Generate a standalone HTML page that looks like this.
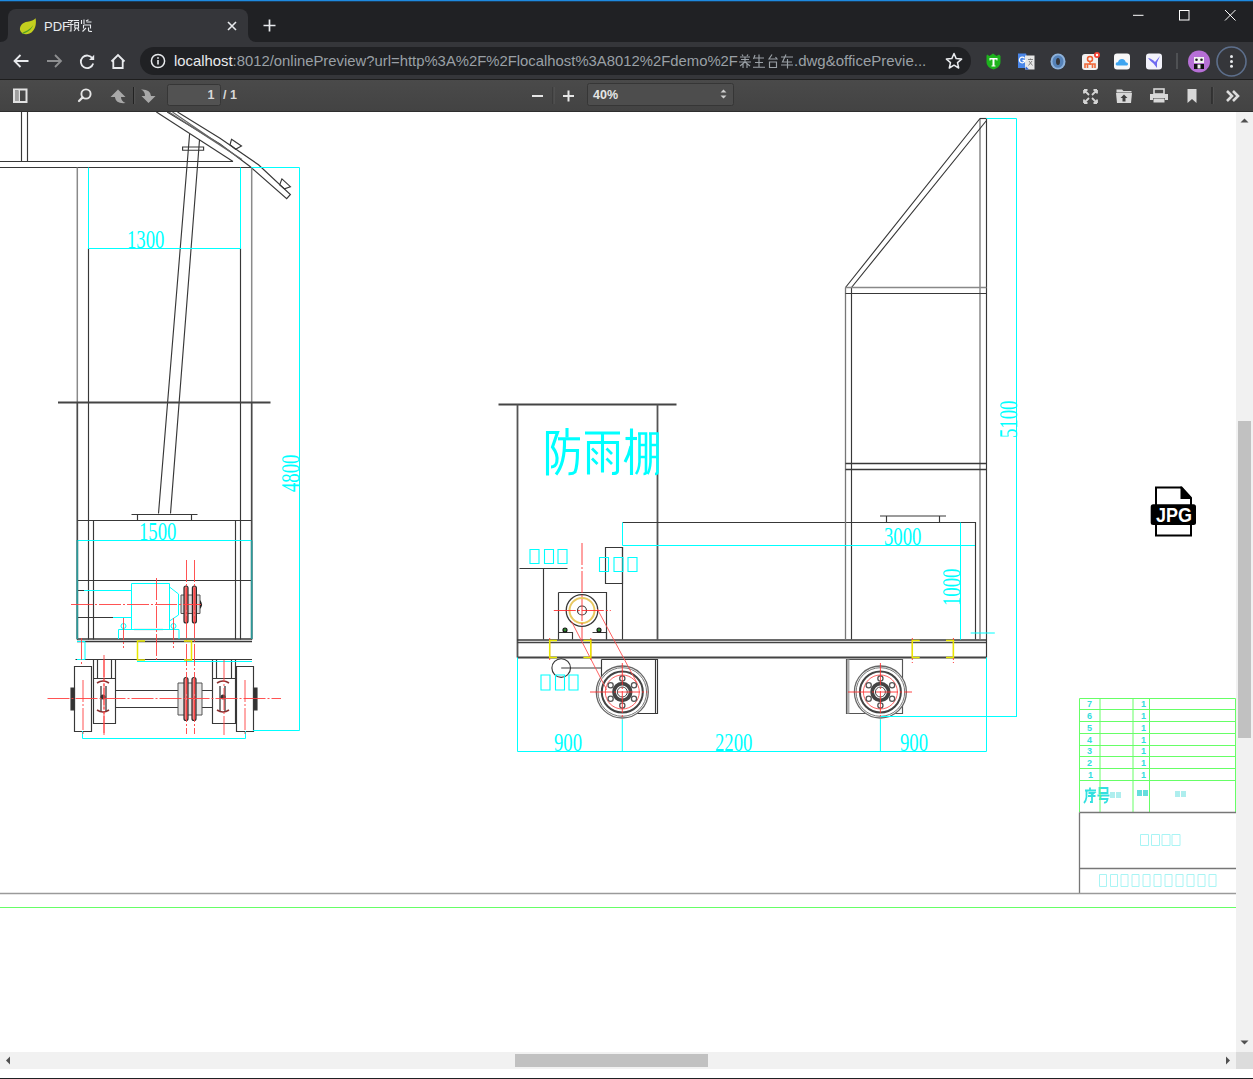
<!DOCTYPE html>
<html><head><meta charset="utf-8">
<style>
*{margin:0;padding:0;box-sizing:border-box}
html,body{width:1253px;height:1079px;overflow:hidden;background:#fff;font-family:"Liberation Sans",sans-serif}
.abs{position:absolute}
.t{position:absolute;white-space:nowrap}
</style></head><body>
<div class="abs" style="left:0;top:112px;width:1236px;height:940px;background:#fff"></div>
<svg class="abs" style="left:0;top:0" width="1236" height="1052" viewBox="0 0 1236 1052">
<defs><clipPath id="cc"><rect x="0" y="112" width="1236" height="940"/></clipPath></defs>
<g clip-path="url(#cc)" fill="none" stroke-width="1">
<!-- ===== LEFT VIEW ===== -->
<g stroke="#383838" stroke-width="1.15">
 <!-- top-left posts -->
 <path d="M21.5 100V162M27.5 100V162"/>
 <path d="M0 161.5H233M0 167.5H251.5"/>
 <!-- roof bars -->
 <path d="M156.4 112L233 161.5"/>
 <path d="M167.2 112L220 144.1L249.7 166.3L286.7 198.6L290.4 194.5L258.5 164.8L220 138.2L177.5 112"/>
 <path d="M169 112L242 159.6M172.5 112L242 159.6" stroke="#666"/>
 <path d="M231.5 139.3L241.5 145.9L235.6 149.3L230 144.8Z"/>
 <path d="M281.9 178.9L290.4 186.7L284.5 188.9L279.7 184.9Z"/>
 <!-- inclined post -->
 <path d="M189.6 134L158.5 513.5M199.5 140L170.5 513.5"/>
 <path d="M182.6 147H203.6V150.2H182.6Z"/>
 <!-- uprights -->
 <path d="M77.3 167.5V402M251.7 167.5V402" stroke="#8a8a8a" stroke-width="1.5"/><path d="M77.3 402V639.5M251.7 402V639.5" stroke="#4a4a4a" stroke-width="1.7"/>
 <path d="M88.5 248.5V639.5M240.5 248.5V639.5"/>
 <path d="M58 402.5H270.5" stroke="#444" stroke-width="1.9"/>
 <!-- plate -->
 <path d="M131.5 514.5H197.5M137.5 514.5V520.5M191.5 514.5V520.5"/>
 <path d="M77.5 520.5H251.5M93.5 520.5V639.5M235.5 520.5V639.5"/>
 <path d="M77.5 580.5H251.5"/>
 <path d="M77.5 590.5H84M77.5 617.5H113"/>
 <path d="M77 639H252M77 641.5H252" stroke-width="1.3"/>
 <path d="M75.5 659.5H252"/>
 <path d="M134 629.5H163"/>
 <!-- wheels -->
 <path d="M74.5 666.5H91.5V731.5H74.5Z"/>
 <path d="M236.5 666.5H253.5V731.5H236.5Z"/>
 <path d="M71 688H74.5V710H71Z" fill="#333"/>
 <path d="M253.5 688H257V710H253.5Z" fill="#333"/>
 <path d="M93.5 659.5H115.5V723.5H93.5ZM97.5 659.5V678M111.5 659.5V678M93.5 678.5H115.5"/>
 <path d="M212.5 659.5H235.5V723.5H212.5ZM216.5 659.5V678M231.5 659.5V678M212.5 678.5H235.5"/>
 <path d="M115.5 690.5H212.5M115.5 707.5H212.5"/>
  <path d="M101 686V712M106 686V712M220 686V712M225 686V712" stroke="#222"/>
</g>
<!-- left view coupling (red/dark) -->
<path d="M181 595H200V613.5H181Z" fill="#ddd" stroke="#555" stroke-width="1"/>
<path d="M200 600Q204 604.5 200 609Z" fill="#222"/>
<g stroke="#2a2a2a" stroke-width="1.2">
 <rect x="184" y="586" width="4" height="37" rx="2" fill="#f07070"/>
 <rect x="192.4" y="586" width="4" height="37" rx="2" fill="#f07070"/>
 <path d="M178 683H202V715H178Z" fill="#e6e6e6" stroke="#555" stroke-width="1"/>
 <rect x="184" y="677.5" width="4" height="43" rx="2" fill="#f08080"/>
 <rect x="192" y="677.5" width="4" height="43" rx="2" fill="#f08080"/>
 <path d="M97 683Q103 679 109 683M97 710Q103 714 109 710M217 683Q223 679 229 683M217 710Q223 714 229 710" stroke="#8a3030" stroke-width="1.6"/>
 <circle cx="103" cy="697" r="2.5" fill="#333" stroke="none"/>
 <circle cx="223" cy="697" r="2.5" fill="#333" stroke="none"/>
</g>
<g stroke="#00ffff">
 <path d="M88.5 167.5V248.5M240.5 167.5V248.5M88.5 248.5H240.5"/>
 <path d="M251.5 167.5H299.5V730.5M253 730.5H299.5"/>
 <path d="M77.5 540.5H251.5"/><path d="M77.3 540V639M251.7 540.5V639" stroke="#2a9a9a" stroke-width="1.7"/>
 <path d="M84 590.5H131.5M113 617.5H131.5"/>
 <path d="M131.5 583.5H169.5V629.5H131.5Z"/>
 <path d="M169.5 587L178.5 594V615L169.5 621"/>
 <path d="M118.5 629.5H179V639M118.5 629.5V639"/>
 <path d="M77 641.5H85V659.5H77"/>
 <path d="M137 661.5H252"/>
 <circle cx="123.5" cy="626" r="2.5"/><circle cx="173.5" cy="626" r="2.5"/>
 <path d="M82.5 731V738.5H245.5V731"/>
</g>
<g stroke="#ff4040" stroke-dasharray="22 2 2 2" stroke-width="0.9">
 <path d="M71 604.5H201M156.5 578V662M123.5 618V648M173.5 618V648M81.5 638V665"/>
 <path d="M186.5 560V734M194.5 560V734"/>
 <path d="M47.5 698.5H281M83 680V735M245 680V735M104 660V735M224 660V735M104 655V735"/>
</g>
<g stroke="#e8e800" stroke-width="1.5"><path d="M145 641H137.5V660H145M184 641H191.5V660H184"/></g>
<!-- ===== RIGHT VIEW ===== -->
<g stroke="#383838" stroke-width="1.15">
 <path d="M498.5 404.5H676.5" stroke="#444" stroke-width="1.9"/>
 <path d="M517.5 404.5V657.5M657.5 404.5V639.5" stroke="#555" stroke-width="1.8"/>
 <path d="M519.5 568.5H567.5M543.5 568.5V639.5"/>
 <path d="M605.5 547.5H622.5V583.5H605.5Z"/>
 <path d="M622.5 522.5H975.5V639.5"/>
 <path d="M622.5 547V639.5"/>
 <path d="M558.5 592.5H606.5V639.5M558.5 592.5V639.5"/>
 <path d="M558.5 632.5H572.5V639.5M592.5 632.5H606.5V639.5"/>
 <circle cx="565" cy="630" r="2" fill="#2a8a2a" stroke="#111"/><circle cx="599" cy="630" r="2" fill="#2a8a2a" stroke="#111"/>
 <circle cx="582" cy="610.5" r="15.8" stroke-width="1.3"/>
 <circle cx="582" cy="610.5" r="4.5"/>
 <!-- frame -->
 <path d="M517 640H986.5" stroke-width="1.3"/><path d="M517 642.5H986.5" stroke="#444" stroke-width="1.6"/>
 <path d="M517 657.5H986.5" stroke-width="1.8" stroke="#444"/>
 <!-- right uprights -->
 <path d="M845.5 287.5V639.5" stroke="#777" stroke-width="1.3"/><path d="M851.5 287.5V639.5"/>
 <path d="M980 118.5V639.5" stroke="#777" stroke-width="1.3"/><path d="M986.5 118.5V657.5"/>
 <path d="M980 118.5H986.5"/>
 <path d="M845.5 287.5L980 118.5M851.5 287.5L986.5 120.5"/>
 <path d="M845.5 287.5H986.5" stroke="#888" stroke-width="1.4"/><path d="M845.5 293.5H986.5"/>
 <path d="M845.5 463.5H986.5M845.5 469.5H986.5" stroke-width="1.3"/>
 <!-- tank plate -->
 <path d="M880 516H946M886.5 516V522.5M939.5 516V522.5"/>
 <!-- small circle -->
 <circle cx="561.2" cy="668" r="9.3"/>
 <path d="M561.2 668H601.5"/>
 <!-- wheel brackets -->
 <path d="M601.5 659.5H657.5V713.5H630M601.5 659.5V686"/>
 <path d="M655.5 659.5V713.5"/>
 <path d="M846.5 659.5H902.5V713.5H846.5Z" stroke="#555"/><path d="M848.2 659.5V713.5" stroke="#aaa" stroke-width="2.5"/>
</g>
<!-- wheels -->
<g stroke="#444">
 <circle cx="622.3" cy="692" r="26" stroke-width="1.3" fill="#fff" stroke="#666"/>
 <circle cx="622.3" cy="692" r="24.3" stroke="#777"/>
 <circle cx="622.3" cy="692" r="20.5" stroke-width="2"/>
 <circle cx="622.3" cy="692" r="8.3" stroke-width="3.8"/>
 <circle cx="622.3" cy="692" r="5"/>
 <circle cx="880.4" cy="692" r="26" stroke-width="1.3" fill="#fff" stroke="#666"/>
 <circle cx="880.4" cy="692" r="24.3" stroke="#777"/>
 <circle cx="880.4" cy="692" r="20.5" stroke-width="2"/>
 <circle cx="880.4" cy="692" r="8.3" stroke-width="3.8"/>
 <circle cx="880.4" cy="692" r="5"/>
</g>
<g stroke="#ff5050" stroke-width="0.9">
 <circle cx="622.3" cy="692" r="17"/>
 <circle cx="880.4" cy="692" r="17"/>
 <g stroke="#555" stroke-width="1.3"><circle cx="622.3" cy="705.5" r="2.6"/><circle cx="610.6" cy="698.8" r="2.6"/><circle cx="610.6" cy="685.2" r="2.6"/><circle cx="622.3" cy="678.5" r="2.6"/><circle cx="634.0" cy="685.2" r="2.6"/><circle cx="634.0" cy="698.8" r="2.6"/><circle cx="880.4" cy="705.5" r="2.6"/><circle cx="868.7" cy="698.8" r="2.6"/><circle cx="868.7" cy="685.2" r="2.6"/><circle cx="880.4" cy="678.5" r="2.6"/><circle cx="892.1" cy="685.2" r="2.6"/><circle cx="892.1" cy="698.8" r="2.6"/></g>
 <circle cx="582" cy="610.5" r="12.5" stroke="#e8c860" stroke-width="2"/>
 <path d="M571.4 621.2L606.6 689.7M597.3 609L637.2 683.3"/>
</g>
<g stroke="#ff3030" stroke-dasharray="22 2 2 2" stroke-width="0.9">
 <path d="M582 543V640M553.8 610.5H610.8"/>
 <path d="M590 692H647.4M622.3 663V719.4M848 692H912M880.4 663V719.4"/>
 <path d="M549.7 638V662M590.8 638V662M912.3 638V663M953.4 638V663"/>
</g>
<g stroke="#e8e800" stroke-width="1.5"><path d="M557 640.5H549.7V657.5H557M583.4 640.5H590.8V657.5H583.4M919.7 640.5H912.3V657.5H919.7M946 640.5H953.4V657.5H946"/></g>
<g stroke="#00ffff">
 <path d="M622.5 522.5V545.5H975M960.5 522.5V639.5"/>
 <path d="M970.7 633H994.8"/>
 <path d="M517.5 657.5V751.5H986.5V657.5M622.3 719.4V751.5M880.4 719.4V751.5"/>
 <path d="M986.5 118.5H1016.5V717M880.4 716.5H1016.5"/>
</g>
</g>
<!-- dimension texts -->
<g fill="#00ffff" font-family="Liberation Serif" font-size="26">
 <text transform="translate(127,248) scale(0.72,1)">1300</text>
 <text transform="translate(139,540) scale(0.72,1)">1500</text>
 <text transform="translate(884,545) scale(0.72,1)">3000</text>
 <text transform="translate(554,751) scale(0.72,1)">900</text>
 <text transform="translate(715,751) scale(0.72,1)">2200</text>
 <text transform="translate(900,751) scale(0.72,1)">900</text>
 <text transform="translate(299,492) rotate(-90) scale(0.72,1)">4800</text>
 <text transform="translate(1017,438) rotate(-90) scale(0.72,1)">5100</text>
 <text transform="translate(960,606) rotate(-90) scale(0.72,1)">1000</text>
</g>
<!-- CJK big text -->
<g fill="none" stroke="#00ffff" stroke-width="3.1" stroke-linecap="butt" stroke-linejoin="miter">
 <path d="M547.5 431V475.5"/>
 <path d="M546 432.5H557.5L552.5 447Q558.5 455 556.8 462Q555.5 467 551 467"/>
 <path d="M567 428V437.5"/>
 <path d="M558 438.8H580"/>
 <path d="M564.5 440Q565 463 556 474.5"/>
 <path d="M564 450.5H577.5Q577.5 466 575 472Q573 474 568.5 473.8"/>
 <path d="M585 433H620"/>
 <path d="M602.5 433V472.5"/>
 <path d="M588.5 474.5V442.5H617.5V471Q617.5 473.8 612 473.5"/>
 <path d="M592 448.5L597.5 454M592 458.5L597.5 464M606.5 448.5L612 454M606.5 458.5L612 464" stroke-width="2.8"/>
 <path d="M625.5 438.5H637"/>
 <path d="M631.5 428.5V475"/>
 <path d="M631 446Q629 455 625 462"/>
 <path d="M639.5 433V462Q639 470 636 474M638 433.5H646V472Q646 474 643.5 474M639.5 445H646M639.5 457H646" stroke-width="2.6"/>
 <path d="M650.5 433V462Q650 470 647.5 474M649 433.5H657.5V472Q657.5 474 655 474M650.5 445H657.5M650.5 457H657.5" stroke-width="2.6"/>
</g>
<g fill="none" stroke="#33e0e0" stroke-width="1.8">
 <path d="M1090 787.5V790M1085 790.5H1096M1086.5 790.5V797Q1086 801 1084 803M1088.5 793H1094L1091 795.5M1088 796H1095.5M1092 796V802H1090"/>
 <path d="M1099.5 788H1107.5V793H1099.5ZM1097.5 795.5H1109.5M1101 795.5L1100 799H1107.5Q1107 803 1104 802.5"/>
</g>
<g fill="#aeeeee">
 <rect x="1110" y="792" width="5" height="6"/><rect x="1116" y="792" width="5" height="6"/>
 <rect x="1137" y="790" width="5" height="6" fill="#66dddd"/><rect x="1143" y="790" width="5" height="6" fill="#66dddd"/>
 <rect x="1175" y="791" width="5" height="6"/><rect x="1181" y="791" width="5" height="6"/>
</g>
<!-- tofu boxes -->
<g fill="none" stroke="#00ffff" stroke-width="1.1">
 <path d="M530 549.5h9v14h-9zM544.5 549.5h9v14h-9zM558 549.5h9v14h-9z"/>
 <path d="M599.5 557.5h9v14h-9zM614 557.5h9v14h-9zM628 557.5h9v14h-9z"/>
 <path d="M541 675h9v15h-9zM555.5 675h9v15h-9zM569 675h9v15h-9z"/>
</g>
<!-- TITLE BLOCK -->
<g fill="none">
 <g stroke="#66ff66" stroke-width="1">
 <path d="M1079.5 698.5H1235.5M1079.5 709.5H1235.5M1079.5 721.5H1235.5M1079.5 733.5H1235.5M1079.5 745.5H1235.5M1079.5 756.5H1235.5M1079.5 768.5H1235.5M1079.5 780.5H1235.5"/>
 <path d="M1079.5 698.5V812M1100 698.5V812M1133 698.5V812M1149.5 698.5V812M1235.5 698.5V812"/>
 </g>
 <path d="M1079.5 812.5H1236M1079.5 868.5H1236M1079.5 812.5V893" stroke="#777" stroke-width="1.3"/>
 <path d="M0 893.5H1236" stroke="#9a9a9a" stroke-width="1.5"/>
 <path d="M0 907.5H1236" stroke="#66ff66" stroke-width="1.2"/>
</g>
<g fill="#33dddd" font-family="Liberation Sans" font-size="9" font-weight="bold">
 <text x="1087" y="707">7</text><text x="1087" y="719">6</text><text x="1087" y="731">5</text><text x="1087" y="743">4</text><text x="1087" y="754">3</text><text x="1087" y="766">2</text><text x="1088" y="778">1</text>
 <text x="1141" y="707">1</text><text x="1141" y="719">1</text><text x="1141" y="731">1</text><text x="1141" y="743">1</text><text x="1141" y="754">1</text><text x="1141" y="766">1</text><text x="1141" y="778">1</text>
</g>
<g fill="none" stroke="#a8f4f4" stroke-width="1">
 <path d="M1140.5 834.5h8v11h-8zM1151.5 834.5h8v11h-8zM1162 834.5h8v11h-8zM1172 834.5h8v11h-8z"/>
 <path d="M1099.5 874.5h7v12h-7zM1110.5 874.5h7v12h-7zM1121 874.5h7v12h-7zM1132 874.5h7v12h-7zM1143 874.5h7v12h-7zM1154 874.5h7v12h-7zM1165 874.5h7v12h-7zM1176 874.5h7v12h-7zM1187 874.5h7v12h-7zM1198 874.5h7v12h-7zM1209 874.5h7v12h-7z"/>
</g>
<!-- JPG icon -->
<g>
 <path d="M1156 487.5H1181L1191 498.5V535.5H1156Z" fill="none" stroke="#000" stroke-width="2"/>
 <path d="M1180.5 486.5H1182L1192 497.5V499H1180.5Z" fill="#000"/>
 <rect x="1150.7" y="504.2" width="45.3" height="20.8" rx="2.5" fill="#000"/>
 <text x="1156" y="522" font-family="Liberation Sans" font-weight="bold" font-size="20.5" fill="#fff" textLength="36" lengthAdjust="spacingAndGlyphs">JPG</text>
</g>
</svg>
<!-- TAB STRIP -->
<div class="abs" style="left:0;top:0;width:1253px;height:42px;background:#202124"></div>
<div class="abs" style="left:0;top:0;width:1253px;height:1px;background:#1d8ae0"></div>
<div class="abs" style="left:0;top:1px;width:1253px;height:1px;background:#1a5a8f;opacity:.5"></div>
<div class="abs" style="left:8px;top:9px;width:240px;height:34px;background:#35363a;border-radius:8px 8px 0 0"></div>
<div class="abs" style="left:248px;top:30px;width:8px;height:12px;background:#35363a"></div>
<div class="abs" style="left:248px;top:9px;width:8px;height:33px;background:#202124;border-bottom-left-radius:8px"></div>
<svg class="abs" style="left:0;top:0" width="60" height="45" viewBox="0 0 60 45">
 <path d="M0 30H8V42H0Z" fill="#35363a"/>
 <path d="M0 9H8V34Q8 42 0 42Z" fill="#202124"/>
 <path d="M35.6 18.3C36.6 24 35.5 31 29.5 33.6C25.5 35 21 34 20 30C19.5 26 22.5 22.3 27.5 21.8C31 21.4 34 20.3 35.6 18.3Z" fill="#c3cf1e"/>
 <path d="M21.8 33.2C25 31.5 30.5 29.5 33.2 25C31.5 30 27 32.5 23 33.8Z" fill="#4f9e23"/>
</svg>
<div class="t" style="left:44px;top:18px;font-size:13px;color:#e8eaed;line-height:17px">PDF</div>
<svg class="abs" style="left:67px;top:19px" width="26" height="14" viewBox="0 0 26 14"><g fill="none" stroke="#e8eaed" stroke-width="1.1">
 <path d="M1 1.5H5.5L3.2 4M0.5 5.5H6.5M4 4.5V12H2.5"/>
 <path d="M6.5 1.5H12M7.8 3.5H11.5V9H7.8ZM7.8 6.3H11.5M9 9.2L7 12M10.5 9.2L12 12"/>
 <path d="M14.5 1V5M17 0.5V5M19 2L21.5 0.8M19.5 3H24.5"/>
 <path d="M16.5 6H23.5V9.5M16.5 6V9.5M19 9L15.5 12.5M21.5 8.5V11.5Q21.5 12.5 25 12.5"/>
</g></svg>
<svg class="abs" style="left:227px;top:21px" width="10" height="10" viewBox="0 0 10 10"><path d="M1 1L9 9M9 1L1 9" stroke="#e8eaed" stroke-width="1.6"/></svg>
<svg class="abs" style="left:263px;top:19px" width="13" height="13" viewBox="0 0 13 13"><path d="M6.5 0.5V12.5M0.5 6.5H12.5" stroke="#e8eaed" stroke-width="1.7"/></svg>
<svg class="abs" style="left:1130px;top:8px" width="120" height="14" viewBox="0 0 120 14">
 <path d="M3 7.3H13.5" stroke="#fff" stroke-width="1"/>
 <rect x="49.5" y="2.5" width="9.5" height="9.5" fill="none" stroke="#fff" stroke-width="1"/>
 <path d="M95 2L105.5 12.5M105.5 2L95 12.5" stroke="#fff" stroke-width="1"/>
</svg>
<!-- TOOLBAR -->
<div class="abs" style="left:0;top:42px;width:1253px;height:38px;background:#35363a"></div>
<svg class="abs" style="left:10px;top:50px" width="120" height="22" viewBox="0 0 120 22">
 <path d="M18.5 11H5M10.5 5L4.5 11L10.5 17" fill="none" stroke="#e8eaed" stroke-width="1.8"/>
 <path d="M37 11H50.5M45 5L51 11L45 17" fill="none" stroke="#8e8f91" stroke-width="1.8"/>
 <path d="M82.5 8.5 A6.3 6.3 0 1 0 83.2 13.5" fill="none" stroke="#e8eaed" stroke-width="1.8"/>
 <path d="M84.2 4.8V10H79Z" fill="#e8eaed"/>
 <path d="M101.5 11.5L108 5L114.5 11.5M103.3 10V18H112.7V10" fill="none" stroke="#e8eaed" stroke-width="1.8"/>
</svg>
<div class="abs" style="left:140px;top:47px;width:831px;height:28px;background:#202124;border-radius:14px"></div>
<svg class="abs" style="left:150px;top:52px" width="18" height="18" viewBox="0 0 18 18">
 <circle cx="8" cy="9" r="6.6" fill="none" stroke="#e8eaed" stroke-width="1.5"/>
 <rect x="7.2" y="8" width="1.6" height="4.5" fill="#e8eaed"/><rect x="7.2" y="5.2" width="1.6" height="1.6" fill="#e8eaed"/>
</svg>
<div class="t" style="left:174px;top:52px;font-size:15px;line-height:18px;color:#9aa0a6;transform:scaleX(0.9895);transform-origin:0 0"><span style="color:#e8eaed">localhost</span>:8012/onlinePreview?url=http%3A%2F%2Flocalhost%3A8012%2Fdemo%2F</div>
<svg class="abs" style="left:738px;top:54px" width="56" height="15" viewBox="0 0 56 15"><g fill="none" stroke="#9aa0a6" stroke-width="1.15">
 <path d="M4 0.5L5 2M10 0.5L9 2M2 3H12M3 5.5H11M1 8H13M7 3V8M7 8L2 12M7 8L12 12M5 10V14M9 10V14"/>
 <path d="M17 1L15.5 5M16.5 4H26M17 8.5H25M15 13.2H27M21 0.5V13.2"/>
 <path d="M34 0.5L31 5H39L37.5 3M31.5 8H38.5V13.5H31.5Z"/>
 <path d="M43 3H55M48 0.5L44.5 8H54M43 11H55M49.5 5V14.5"/>
</g></svg>
<div class="t" style="left:794px;top:52px;font-size:15px;line-height:18px;color:#9aa0a6">.dwg&amp;officePrevie...</div>
<svg class="abs" style="left:944px;top:51px" width="20" height="20" viewBox="0 0 20 20">
 <path d="M10 2.5L12.2 7.6L17.6 8.1L13.5 11.6L14.7 17L10 14.2L5.3 17L6.5 11.6L2.4 8.1L7.8 7.6Z" fill="none" stroke="#e8eaed" stroke-width="1.5" stroke-linejoin="round"/>
</svg>
<!-- extension icons -->
<svg class="abs" style="left:985px;top:44px" width="268" height="36" viewBox="0 0 268 36"><g transform="translate(0,8)">
 <path d="M2 2.5L4.5 4L8 1.5L11.5 4L14 2.5L15.5 4V10C15.5 14 12 16.5 8.5 17.5C5 16.5 1.5 14 1.5 10V4Z" fill="#1db31d"/>
 <path d="M4.5 6H12.5V8.5H11.5V7.5H9.5V13.5H10.5V14.5H6.5V13.5H7.5V7.5H5.5V8.5H4.5Z" fill="#fff"/>
 <path d="M33 1.5H41L46 16H33Z" fill="#4a86e8"/>
 <rect x="40" y="3.5" width="9.5" height="14" fill="#e6e6e6"/>
 <path d="M41 14.5L44 17.5H40Z" fill="#3367d6"/>
 <path d="M39.5 6.3A2.8 2.8 0 1 0 40 8.5H37.5" fill="none" stroke="#fff" stroke-width="1.3"/>
 <path d="M43 7.5H48M45.5 6.5V8M44 9L47.5 13.5M47 9L43.5 13.5" stroke="#777" stroke-width="0.9"/>
 <ellipse cx="73" cy="9.5" rx="7.5" ry="8" fill="#8eb2da"/>
 <ellipse cx="73" cy="9.5" rx="5.5" ry="6.3" fill="#5582b8"/>
 <ellipse cx="73" cy="9.5" rx="2" ry="3.6" fill="#35363a"/>
 <rect x="97" y="2" width="16" height="16" rx="3" fill="#f0f0f0"/>
 <circle cx="105" cy="7" r="2.5" fill="none" stroke="#ef5a2b" stroke-width="1.5"/>
 <path d="M105 9.5V13M100 16V12H110V16M102.5 12V16M107.5 12V16" fill="none" stroke="#ef6a3b" stroke-width="1.6"/>
 <circle cx="112" cy="3" r="3" fill="#f44336"/><circle cx="112" cy="3" r="1.2" fill="#fff"/>
 <rect x="129" y="1.5" width="16" height="16" rx="3" fill="#f7f7f7"/>
 <path d="M132 13.5C131 13.5 130.5 12.5 130.8 11.5C131 10.5 132 10 133 10.2C133.5 8 135 7 137 7C139 7 140.5 8.5 140.7 10.2C142 10.2 143 11 143 12C143 13 142 13.5 141.5 13.5Z" fill="#3ea5f0"/>
 <rect x="161" y="1.5" width="16" height="16" rx="3" fill="#f2f2fa"/>
 <path d="M163 6C166 6.5 168 8 170 10L175 4L172 10.5L172 16L168.5 11.5C166.5 10 164.5 8 163 6Z" fill="#6e6af0"/>
 <rect x="191.5" y="1" width="1" height="16" fill="#6b6c6f"/>
 <circle cx="214" cy="9.5" r="11" fill="#b66fd6"/>
 <path d="M209 5H219V11H209Z" fill="#f1f1f1"/><circle cx="211.5" cy="7.8" r="1.3" fill="#222"/><circle cx="216.5" cy="7.8" r="1.3" fill="#222"/>
 <path d="M209 12H219V17H209Z" fill="#111"/><rect x="212.5" y="12.5" width="3" height="4" fill="#eee"/>
 <circle cx="246.5" cy="9.5" r="14.5" fill="none" stroke="#5d6f8c" stroke-width="1.6"/>
 <circle cx="246.5" cy="4.5" r="1.5" fill="#e8eaed"/><circle cx="246.5" cy="9.4" r="1.5" fill="#e8eaed"/><circle cx="246.5" cy="14.3" r="1.5" fill="#e8eaed"/>
</g></svg>
<!-- PDF TOOLBAR -->
<div class="abs" style="left:0;top:79px;width:1253px;height:1px;background:#1e1e1e"></div>
<div class="abs" style="left:0;top:80px;width:1253px;height:31px;background:linear-gradient(#4a4a4a,#434343)"></div>
<div class="abs" style="left:0;top:111px;width:1253px;height:1px;background:#2e2e2e"></div>
<svg class="abs" style="left:0;top:80px" width="260" height="31" viewBox="0 0 260 31">
 <rect x="14" y="9.5" width="12.5" height="12.5" fill="none" stroke="#e2e2e2" stroke-width="2"/>
 <rect x="15" y="10.5" width="3.5" height="10.5" fill="#a0a0a0"/>
 <rect x="18.5" y="10" width="1.5" height="12" fill="#e2e2e2"/>
 <circle cx="86" cy="14" r="4.6" fill="none" stroke="#e6e6e6" stroke-width="1.9"/>
 <path d="M82.6 17.4L79 21" stroke="#e6e6e6" stroke-width="2.2" stroke-linecap="round"/>
 <path d="M110.5 17L118 9.5L125.5 17H121Q121 21 125.5 23Q116 24 115 17.5V17Z" fill="#a8a8a8"/>
 <rect x="133" y="7" width="1.2" height="17" fill="#222"/><rect x="134.2" y="7" width="1" height="17" fill="#555"/>
 <path d="M141.5 16H145Q145 11 141 9.5Q150.5 9 151 16H155.5L148.5 23Z" fill="#a8a8a8"/>
 <rect x="167.5" y="4.5" width="53" height="21" rx="2" fill="#525252" stroke="#363636" stroke-width="1"/>
</svg>
<div class="t" style="left:164.5px;top:87px;width:50px;text-align:right;font-size:12.5px;font-weight:bold;color:#d9d9d9;line-height:16px">1</div>
<div class="t" style="left:223px;top:87px;font-size:12.5px;font-weight:bold;color:#d9d9d9;line-height:16px">/ 1</div>
<svg class="abs" style="left:520px;top:80px" width="220" height="31" viewBox="0 0 220 31">
 <rect x="12" y="15" width="11" height="2" fill="#e6e6e6"/>
 <rect x="32.5" y="7" width="1" height="17" fill="#333"/><rect x="33.5" y="7" width="1" height="17" fill="#585858"/>
 <rect x="43" y="15" width="11" height="2" fill="#e6e6e6"/><rect x="47.5" y="10.5" width="2" height="11" fill="#e6e6e6"/>
 <rect x="67.5" y="3.5" width="146" height="22" rx="2" fill="#4d4d4d" stroke="#363636" stroke-width="1"/>
 <path d="M200.5 12.5L203.5 9.5L206.5 12.5ZM200.5 15.5L203.5 18.5L206.5 15.5Z" fill="#d0d0d0"/>
</svg>
<div class="t" style="left:593px;top:88px;font-size:12.5px;font-weight:bold;color:#e6e6e6;line-height:15px">40%</div>
<svg class="abs" style="left:1070px;top:80px" width="183" height="31" viewBox="0 0 183 31">
 <g fill="none" stroke="#d4d4d4" stroke-width="1.8">
 <path d="M14 10L19 15M14 10V13.5M14 10H17.5"/><path d="M27 10L22 15M27 10V13.5M27 10H23.5"/>
 <path d="M14 23L19 18M14 23V19.5M14 23H17.5"/><path d="M27 23L22 18M27 23V19.5M27 23H23.5"/>
 </g>
 <path d="M46.5 11V9.5H52L53.5 11H61.5V12.5H46.5Z" fill="#d8d8d8"/>
 <path d="M46 13H62L61 23H47Z" fill="#d8d8d8"/>
 <path d="M54 14.5L50.5 18H52.5V21.5H55.5V18H57.5Z" fill="#3e3e3e"/>
 <rect x="84" y="9" width="10" height="5" fill="none" stroke="#d8d8d8" stroke-width="1.6"/>
 <path d="M80 14H98V20H95V18H83V20H80Z" fill="#d8d8d8"/>
 <rect x="83.5" y="18.5" width="11" height="4" fill="#d8d8d8"/>
 <path d="M117.5 9H126.5V23L122 19L117.5 23Z" fill="#d8d8d8"/>
 <rect x="141.5" y="7" width="1.2" height="17" fill="#1c1c1c"/><rect x="142.7" y="7" width="1" height="17" fill="#555"/>
 <path d="M157 11L162 16L157 21M163 11L168 16L163 21" fill="none" stroke="#dcdcdc" stroke-width="2.6"/>
</svg>
<!-- SCROLLBARS -->
<div class="abs" style="left:1236px;top:112px;width:17px;height:940px;background:#f1f1f1"></div>
<div class="abs" style="left:1238px;top:421px;width:13px;height:317px;background:#c1c1c1"></div>
<svg class="abs" style="left:1236px;top:1034px" width="17" height="17"><path d="M4.5 6.5H12.5L8.5 10.5Z" fill="#505050"/></svg>
<svg class="abs" style="left:1236px;top:112px" width="17" height="17"><path d="M4.5 10.5H12.5L8.5 6.5Z" fill="#505050"/></svg>
<div class="abs" style="left:0;top:1052px;width:1236px;height:17px;background:#f1f1f1"></div>
<div class="abs" style="left:515px;top:1054px;width:193px;height:13px;background:#c1c1c1"></div>
<svg class="abs" style="left:0;top:1052px" width="17" height="17"><path d="M10 4.5V12.5L6 8.5Z" fill="#505050"/></svg>
<svg class="abs" style="left:1219px;top:1052px" width="17" height="17"><path d="M7 4.5V12.5L11 8.5Z" fill="#505050"/></svg>
<div class="abs" style="left:1236px;top:1052px;width:17px;height:17px;background:#dcdcdc"></div>
<div class="abs" style="left:0;top:1078px;width:1253px;height:1px;background:#202124"></div>
</body></html>
